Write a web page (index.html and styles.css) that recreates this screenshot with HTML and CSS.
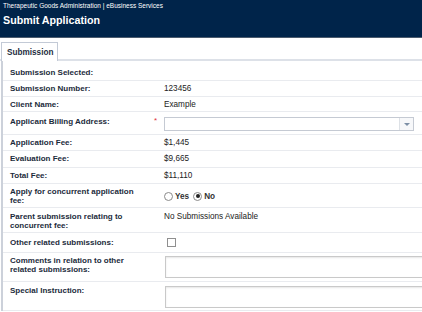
FILE: index.html
```html
<!DOCTYPE html>
<html lang="en">
<head>
    <meta charset="UTF-8">
    <title>Submit Application</title>
    <link rel="stylesheet" href="styles.css">
</head>
<body>
    <div class="header">
        <div class="agency">Therapeutic Goods Administration | eBusiness Services</div>
        <div class="title">Submit Application</div>
    </div>

    <div class="tabs">
        <div class="tab">Submission</div>
    </div>

    <div class="panel">
        <div class="row row-first">
            <div class="label">Submission Selected:</div>
            <div class="req"></div>
            <div class="value"></div>
        </div>
        <div class="row">
            <div class="label">Submission Number:</div>
            <div class="req"></div>
            <div class="value">123456</div>
        </div>
        <div class="row row-short">
            <div class="label">Client Name:</div>
            <div class="req"></div>
            <div class="value">Example</div>
        </div>
        <div class="row row-select">
            <div class="label">Applicant Billing Address:</div>
            <div class="req">*</div>
            <div class="value">
                <div class="select">
                    <div class="select-text"></div>
                    <div class="select-btn"><span class="arrow"></span></div>
                </div>
            </div>
        </div>
        <div class="row">
            <div class="label">Application Fee:</div>
            <div class="req"></div>
            <div class="value">$1,445</div>
        </div>
        <div class="row row-tall">
            <div class="label">Evaluation Fee:</div>
            <div class="req"></div>
            <div class="value">$9,665</div>
        </div>
        <div class="row">
            <div class="label">Total Fee:</div>
            <div class="req"></div>
            <div class="value">$11,110</div>
        </div>
        <div class="row row-radio">
            <div class="label">Apply for concurrent application fee:</div>
            <div class="req"></div>
            <div class="value radios">
                <span class="radio"></span><span class="radio-label">Yes</span>
                <span class="radio checked"></span><span class="radio-label">No</span>
            </div>
        </div>
        <div class="row row-two">
            <div class="label">Parent submission relating to concurrent fee:</div>
            <div class="req"></div>
            <div class="value">No Submissions Available</div>
        </div>
        <div class="row row-check">
            <div class="label">Other related submissions:</div>
            <div class="req"></div>
            <div class="value"><span class="checkbox"></span></div>
        </div>
        <div class="row row-area">
            <div class="label">Comments in relation to other related submissions:</div>
            <div class="req"></div>
            <div class="value"><div class="textarea"></div></div>
        </div>
        <div class="row row-area row-last">
            <div class="label">Special Instruction:</div>
            <div class="req"></div>
            <div class="value"><div class="textarea"></div></div>
        </div>
    </div>
</body>
</html>
```

FILE: styles.css
```css
* {
    margin: 0;
    padding: 0;
    box-sizing: border-box;
}

body {
    width: 422px;
    height: 312px;
    overflow: hidden;
    font-family: "Liberation Sans", Arial, sans-serif;
    background: white;
    color: #333;
}

/* Header */
.header {
    height: 38px;
    padding: 2px 3px 0;
    background: #00244a;
    border-bottom: 1px solid #4b5b6e;
    color: white;
}

.agency {
    font-size: 6.5px;
    line-height: 8px;
}

.title {
    font-size: 10.7px;
    font-weight: bold;
    line-height: 14px;
    margin-top: 3px;
}

/* Tabs */
.tabs {
    display: flex;
    padding-top: 4px;
    border-bottom: 2px solid #dde1e8;
}

.tab {
    margin-left: 1px;
    margin-bottom: -2px;
    height: 19px;
    padding: 1px 4px 0 5px;
    background: white;
    border: 1px solid #c3cad6;
    border-bottom: none;
    font-size: 8.2px;
    font-weight: bold;
    line-height: 17px;
    color: #1e2d3d;
}

/* Form panel */
.panel {
    margin-left: 1px;
    padding-top: 3px;
    border-left: 2px solid #ccd1da;
    overflow: hidden;
}

.row {
    display: flex;
    align-items: flex-start;
    padding: 3px 0 3px 7px;
    border-bottom: 1px solid #e9ebef;
    font-size: 8px;
    line-height: 9px;
}

.row-first {
    padding-top: 4px;
}

.row-short {
    padding-bottom: 2px;
}

.row-tall {
    padding-bottom: 4px;
}

.row-select {
    padding-top: 5px;
}

.row-radio {
    align-items: center;
    padding-bottom: 2px;
}

.row-two {
    padding-top: 4px;
    padding-bottom: 2px;
}

.row-check {
    align-items: center;
    padding-top: 5px;
    padding-bottom: 5px;
}

.row-last {
    padding-top: 4px;
    padding-bottom: 2px;
}

.label {
    width: 144px;
    padding-right: 20px;
    font-weight: bold;
    color: #1c2b3b;
}

.req {
    width: 10px;
    color: #e0323c;
    font-size: 8px;
    line-height: 7px;
}

.value {
    flex: 1;
    min-width: 0;
    font-size: 8.2px;
    color: #222;
}

/* Select */
.select {
    display: flex;
    width: 250px;
    height: 14px;
    border: 1px solid #c5cad3;
    background: white;
}

.select-text {
    flex: 1;
}

.select-btn {
    width: 14px;
    display: flex;
    align-items: center;
    justify-content: center;
    border-left: 1px solid #dde1e6;
    background: #f7f8fa;
}

.arrow {
    width: 0;
    height: 0;
    border-left: 3px solid transparent;
    border-right: 3px solid transparent;
    border-top: 3px solid #7d8fa6;
}

/* Radios */
.radios {
    display: flex;
    align-items: center;
}

.radio {
    position: relative;
    width: 9px;
    height: 9px;
    border: 1px solid #8a8a8a;
    border-radius: 50%;
    background: white;
}

.radio.checked::after {
    content: "";
    position: absolute;
    top: 1.5px;
    left: 1.5px;
    width: 4px;
    height: 4px;
    border-radius: 50%;
    background: #222;
}

.radio-label {
    margin: 0 4px 0 2px;
    font-weight: bold;
    color: #333;
}

/* Checkbox */
.checkbox {
    display: block;
    width: 9px;
    height: 9px;
    margin-left: 3px;
    border: 1px solid #8f8f8f;
    background: white;
}

/* Textarea */
.textarea {
    width: 300px;
    height: 22px;
    margin-left: 1px;
    border: 1px solid #c9c9c9;
    box-shadow: inset 0 1px 2px #e6e6e6;
    background: white;
}
```
